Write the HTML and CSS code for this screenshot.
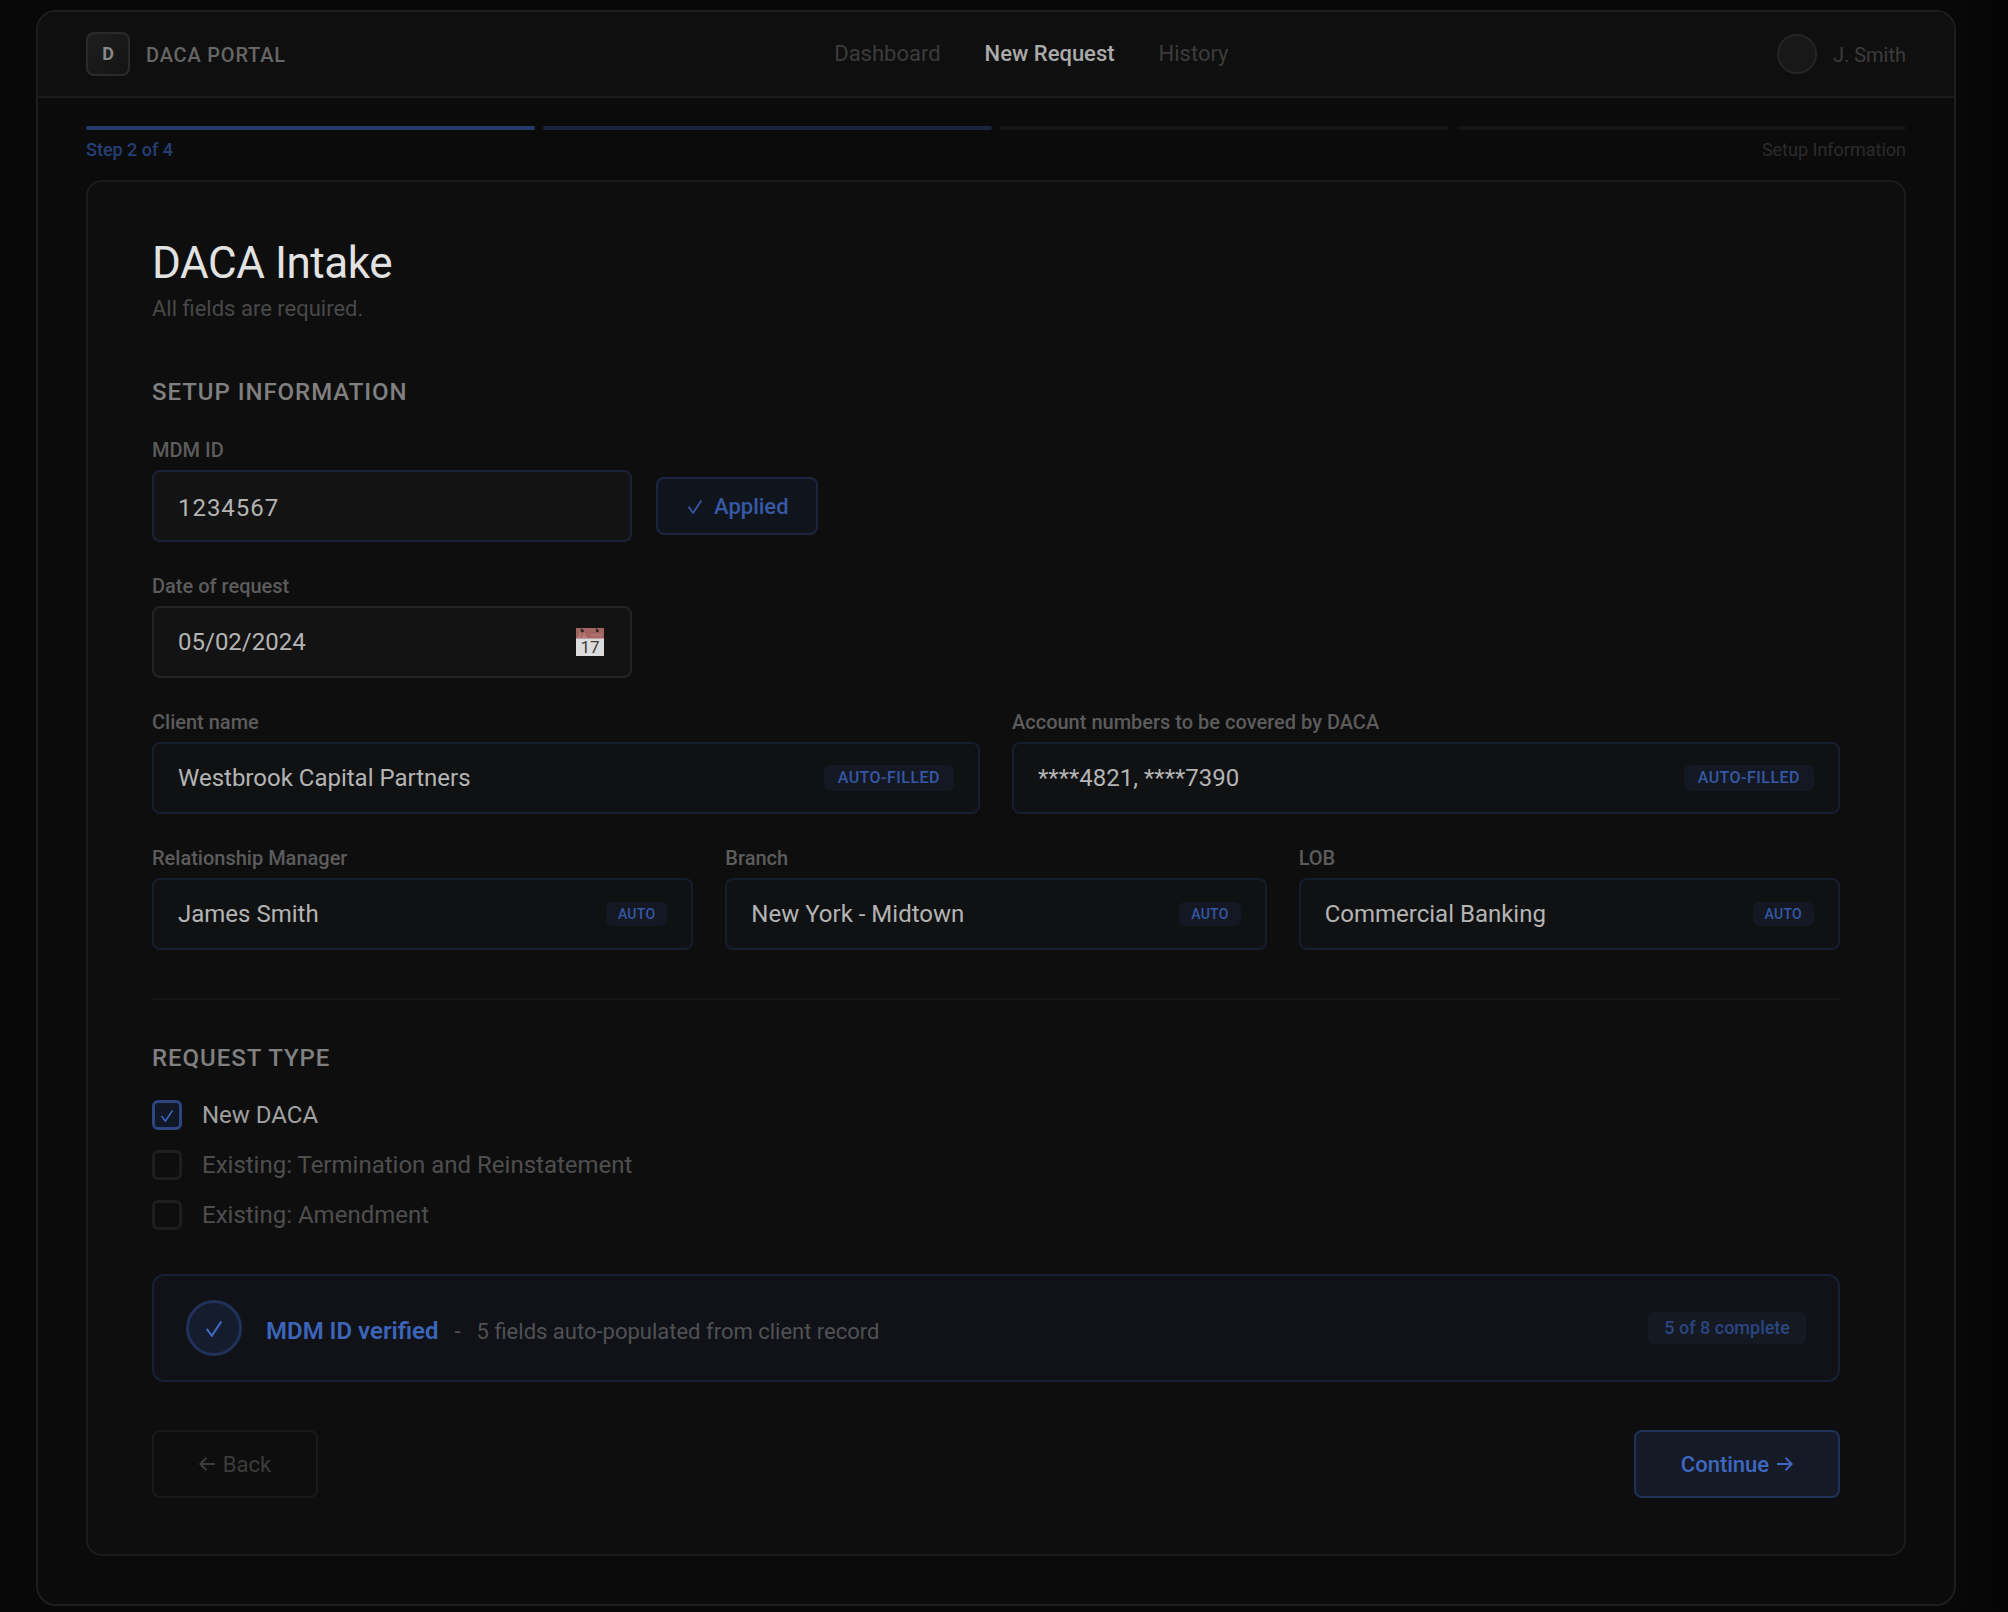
FILE: index.html
```html
<!DOCTYPE html>
<html lang="en">
<head>
    <meta charset="UTF-8">
    <meta name="viewport" content="width=device-width, initial-scale=1.0">
    <title>DACA Portal - New Request</title>
    <link rel="stylesheet" href="styles.css">
</head>
<body>
    <div class="frame">
        <header class="header">
            <div class="brand">
                <div class="logo">D</div>
                <span class="brand-name">DACA PORTAL</span>
            </div>
            <nav class="nav">
                <a class="nav-link">Dashboard</a>
                <a class="nav-link active">New Request</a>
                <a class="nav-link">History</a>
            </nav>
            <div class="user">
                <div class="avatar"></div>
                <span class="user-name">J. Smith</span>
            </div>
        </header>

        <main class="main">
            <div class="progress">
                <div class="step done"></div>
                <div class="step current"></div>
                <div class="step"></div>
                <div class="step"></div>
            </div>
            <div class="progress-labels">
                <span class="step-count">Step 2 of 4</span>
                <span class="step-name">Setup Information</span>
            </div>

            <form class="card">
                <h1 class="title">DACA Intake</h1>
                <p class="subtitle">All fields are required.</p>

                <h2 class="section-title">SETUP INFORMATION</h2>

                <div class="field short">
                    <label class="label">MDM ID</label>
                    <div class="field-row">
                        <div class="input mdm"><span class="mdm-value">1234567</span></div>
                        <div class="applied">
                            <svg class="check" width="16" height="14" viewBox="0 0 16 16"><path d="M0.700 7.800L5.800 14.800L15.300 0.500"/></svg>
                            <span class="applied-text">Applied</span>
                        </div>
                    </div>
                </div>

                <div class="field short">
                    <label class="label">Date of request</label>
                    <div class="input date">
                        <span>05/02/2024</span>
                        <svg class="calendar" width="28" height="28" viewBox="0 0 28 28">
                            <rect width="28" height="28" fill="#dcdcdc"/>
                            <rect width="28" height="10.500" fill="#a46462"/>
                            <path d="M2 9.500l2-1V5M6 9.500l2-1V5M8 8.500l3 1" stroke="#c99593" fill="none"/>
                            <path d="M15 7h11" stroke="#ad7371" stroke-width="3"/>
                            <circle cx="6.300" cy="2.700" r="1.500" fill="#222"/>
                            <circle cx="21.300" cy="2.700" r="1.500" fill="#222"/>
                            <path d="M5 0l1.300 2.700M20 0l1.300 2.700" stroke="#333"/>
                            <text class="calendar-day" x="14" y="25" text-anchor="middle">17</text>
                        </svg>
                    </div>
                </div>

                <div class="grid two">
                    <div class="field">
                        <label class="label">Client name</label>
                        <div class="input auto"><span>Westbrook Capital Partners</span><span class="badge">AUTO-FILLED</span></div>
                    </div>
                    <div class="field">
                        <label class="label">Account numbers to be covered by DACA</label>
                        <div class="input auto"><span>****4821, ****7390</span><span class="badge">AUTO-FILLED</span></div>
                    </div>
                </div>

                <div class="grid three">
                    <div class="field">
                        <label class="label">Relationship Manager</label>
                        <div class="input auto"><span>James Smith</span><span class="badge small">AUTO</span></div>
                    </div>
                    <div class="field">
                        <label class="label">Branch</label>
                        <div class="input auto"><span>New York - Midtown</span><span class="badge small">AUTO</span></div>
                    </div>
                    <div class="field">
                        <label class="label">LOB</label>
                        <div class="input auto"><span>Commercial Banking</span><span class="badge small">AUTO</span></div>
                    </div>
                </div>

                <div class="divider"></div>

                <h2 class="section-title request">REQUEST TYPE</h2>
                <div class="options">
                    <div class="option selected">
                        <span class="checkbox"><svg class="check" width="12" height="12" viewBox="0 0 16 16"><path d="M0.700 7.800L5.800 14.800L15.300 0.500"/></svg></span>
                        <span>New DACA</span>
                    </div>
                    <div class="option">
                        <span class="checkbox"></span>
                        <span>Existing: Termination and Reinstatement</span>
                    </div>
                    <div class="option">
                        <span class="checkbox"></span>
                        <span>Existing: Amendment</span>
                    </div>
                </div>

                <div class="banner">
                    <div class="banner-icon"><svg class="check" width="16" height="16" viewBox="0 0 16 16"><path d="M0.700 7.800L5.800 14.800L15.300 0.500"/></svg></div>
                    <div class="banner-text">
                        <span class="banner-title">MDM ID verified</span>
                        <span class="banner-dash">-</span>
                        <span class="banner-note">5 fields auto-populated from client record</span>
                    </div>
                    <span class="pill">5 of 8 complete</span>
                </div>

                <div class="actions">
                    <div class="btn back">
                        <svg class="arrow" width="16" height="14" viewBox="0 0 16 14"><path d="M16 7H1.500M7.500 0.800L1.300 7L7.500 13.200"/></svg>
                        <span>Back</span>
                    </div>
                    <div class="btn continue">
                        <span>Continue</span>
                        <svg class="arrow" width="16" height="14" viewBox="0 0 16 14"><path d="M0 7H14.500M8.500 0.800L14.700 7L8.500 13.200"/></svg>
                    </div>
                </div>
            </form>
        </main>
    </div>
</body>
</html>
```

FILE: styles.css
```css
* {
    margin: 0;
    padding: 0;
    box-sizing: border-box;
}

body {
    font-family: Roboto, 'Liberation Sans', sans-serif;
    background: linear-gradient(90deg, #080808 0%, #080808 97%, #050505 100%);
    height: 1612px;
    padding: 10px 52px 0 36px;
    overflow: hidden;
}

.frame {
    height: 1596px;
    background: #0b0b0b;
    border: 2px solid #1e1e1e;
    border-radius: 20px;
    overflow: hidden;
}

/* Header */
.header {
    display: flex;
    align-items: center;
    justify-content: space-between;
    height: 86px;
    padding: 0 48px;
    background: #0f0f0f;
    border-bottom: 2px solid #1a1a1a;
}

.brand {
    display: flex;
    align-items: center;
    gap: 16px;
}

.logo {
    width: 44px;
    height: 44px;
    border: 2px solid #2a2a2a;
    border-radius: 8px;
    background: linear-gradient(135deg, #1e1e1e, #141414);
    color: #888;
    font-size: 18px;
    font-weight: 700;
    line-height: 40px;
    text-align: center;
}

.brand-name {
    padding-top: 1px;
    color: #666;
    font-size: 20px;
    font-weight: 500;
    letter-spacing: 0.8px;
}

.nav {
    display: flex;
    gap: 44px;
    padding-bottom: 1px;
}

.nav-link {
    color: #3c3c3c;
    font-size: 22px;
}

.nav-link.active {
    color: #aaa;
    font-weight: 500;
}

.user {
    display: flex;
    align-items: center;
    gap: 16px;
}

.avatar {
    width: 40px;
    height: 40px;
    border: 2px solid #252525;
    border-radius: 50%;
    background: #181818;
}

.user-name {
    padding-top: 1px;
    color: #3c3c3c;
    font-size: 20px;
}

/* Progress */
.main {
    padding: 28px 48px 48px;
}

.progress {
    display: flex;
    gap: 8px;
}

.step {
    flex: 1;
    height: 4px;
    border-radius: 2px;
    background: #151515;
}

.step.done {
    background: #263b6b;
}

.step.current {
    background: #1a2540;
}

.progress-labels {
    display: flex;
    justify-content: space-between;
    height: 50px;
    padding-top: 8px;
    font-size: 18px;
    line-height: 24px;
}

.step-count {
    color: #263f75;
    font-weight: 500;
}

.step-name {
    color: #2c2c2c;
}

/* Card */
.card {
    height: 1376px;
    padding: 56px 64px;
    background: #0e0e0e;
    border: 2px solid #1c1c1c;
    border-radius: 16px;
}

.title {
    color: #e2e2e2;
    font-size: 44px;
    font-weight: 400;
    line-height: 50px;
    letter-spacing: -0.44px;
}

.subtitle {
    margin-top: 8px;
    color: #484848;
    font-size: 22px;
    line-height: 26px;
}

.section-title {
    margin-top: 56px;
    color: #808080;
    font-size: 24px;
    font-weight: 500;
    line-height: 28px;
    letter-spacing: 0.96px;
}

.field {
    flex: 1;
    margin-top: 32px;
}

.label {
    display: block;
    height: 32px;
    color: #5c5c5c;
    font-size: 20px;
    font-weight: 500;
    line-height: 24px;
}

.field-row {
    display: flex;
    align-items: center;
    gap: 24px;
}

.input {
    display: flex;
    align-items: center;
    justify-content: space-between;
    height: 72px;
    padding: 0 24px;
    background: #131313;
    border: 2px solid #242424;
    border-radius: 8px;
    color: #b4b4b4;
    font-size: 24px;
}

.input.mdm {
    width: 480px;
    border-color: #1a2335;
}

.mdm-value {
    padding-top: 3px;
    letter-spacing: 0.96px;
}

.input.date {
    width: 480px;
    padding-right: 26px;
}

.input.auto {
    background: #101113;
    border-color: #161d2c;
}

.applied {
    display: flex;
    align-items: center;
    gap: 11px;
    width: 162px;
    height: 58px;
    padding-left: 29px;
    background: #10141d;
    border: 2px solid #1a2540;
    border-radius: 8px;
    color: #3659a5;
    font-size: 22px;
    font-weight: 500;
}

.check {
    margin-top: 2px;
    fill: none;
    stroke: #3e6cc8;
    stroke-width: 2;
}

.applied .check {
    stroke: #3659a5;
}

.calendar-day {
    fill: #3c3c3c;
    font-size: 17px;
}

.badge {
    padding: 0 14px;
    background: #141822;
    border-radius: 6px;
    color: #3558a6;
    font-size: 16px;
    font-weight: 500;
    line-height: 26px;
    letter-spacing: 0.48px;
}

.badge.small {
    padding: 0 12px;
    font-size: 14px;
    line-height: 24px;
    letter-spacing: 0.28px;
}

.grid {
    display: flex;
    gap: 32px;
}

.divider {
    height: 2px;
    margin-top: 48px;
    background: #161616;
}

/* Request type */
.section-title.request {
    margin-top: 44px;
}

.options {
    display: flex;
    flex-direction: column;
    gap: 20px;
    margin-top: 28px;
}

.option {
    display: flex;
    align-items: center;
    gap: 20px;
    height: 30px;
    color: #4e4e4e;
    font-size: 24px;
}

.option.selected {
    color: #a0a0a0;
}

.checkbox {
    display: flex;
    align-items: center;
    justify-content: center;
    width: 30px;
    height: 30px;
    border: 3px solid #1e1e1e;
    border-radius: 6px;
}

.selected .checkbox {
    border-color: #2b4680;
    background: #121725;
}

/* Verified banner */
.banner {
    display: flex;
    align-items: center;
    height: 108px;
    margin-top: 44px;
    padding: 0 32px;
    background: #101217;
    border: 2px solid #172035;
    border-radius: 12px;
}

.banner-icon {
    display: flex;
    align-items: center;
    justify-content: center;
    width: 56px;
    height: 56px;
    border: 3px solid #20325a;
    border-radius: 50%;
    background: #151c2e;
}

.banner-text {
    display: flex;
    align-items: baseline;
    flex: 1;
    gap: 16px;
    padding: 5px 0 0 24px;
    color: #505154;
    font-size: 22px;
}

.banner-title {
    color: #3c64b9;
    font-size: 24px;
    font-weight: 600;
}

.pill {
    padding: 0 16px;
    background: #141922;
    border-radius: 6px;
    color: #2b4680;
    font-size: 18px;
    font-weight: 500;
    line-height: 32px;
}

/* Buttons */
.actions {
    display: flex;
    justify-content: space-between;
    margin-top: 48px;
}

.btn {
    display: flex;
    align-items: center;
    justify-content: center;
    gap: 8px;
    height: 68px;
    border: 2px solid #1a1a1a;
    border-radius: 8px;
    font-size: 22px;
}

.back {
    width: 166px;
    color: #3c3c3c;
}

.continue {
    width: 206px;
    background: #151a26;
    border-color: #20325a;
    color: #3e68c0;
    font-weight: 500;
}

.arrow {
    fill: none;
    stroke: currentColor;
    stroke-width: 2;
}
```
